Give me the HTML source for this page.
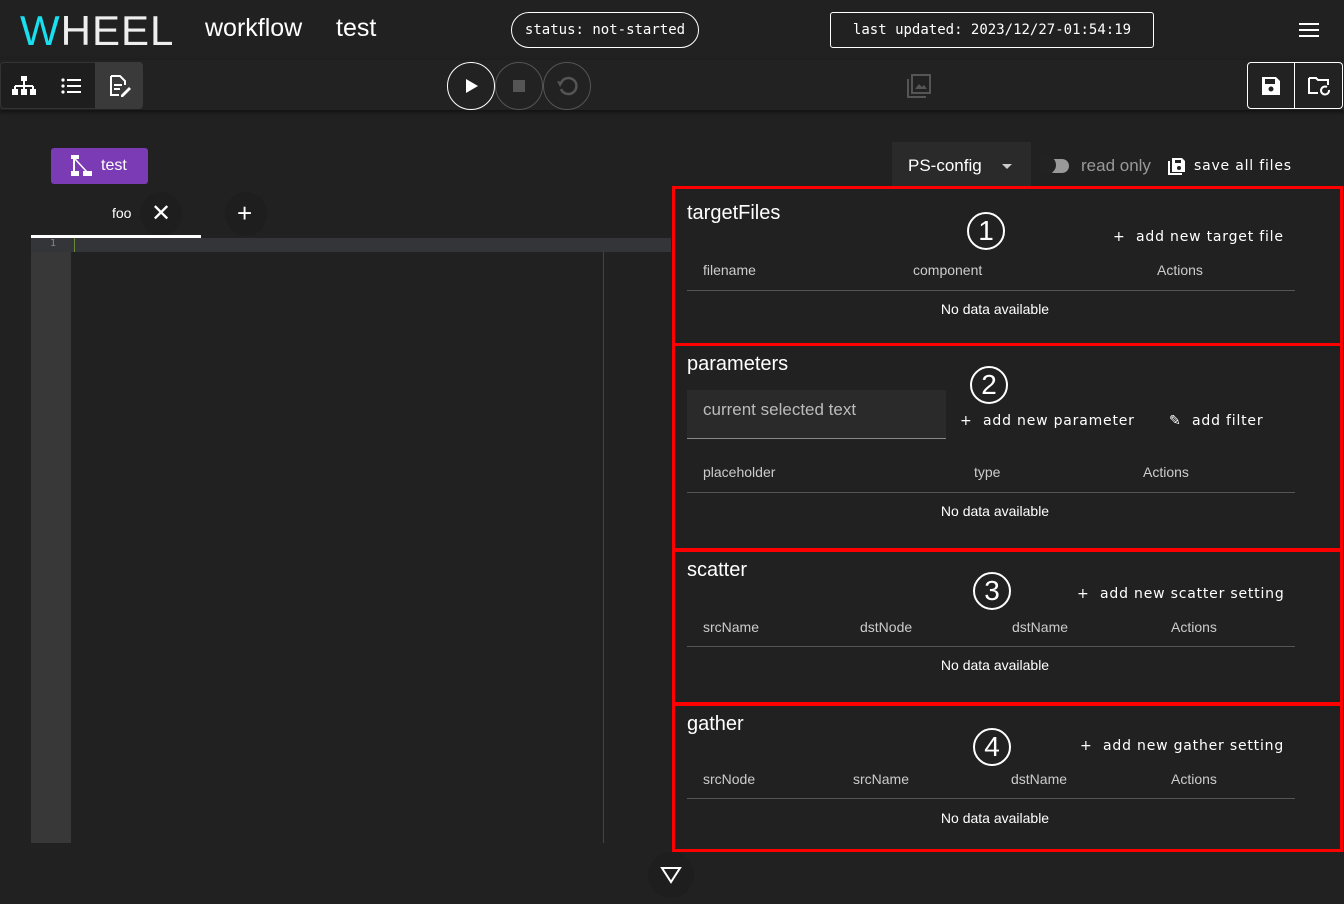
<!DOCTYPE html>
<html><head><meta charset="utf-8"><style>
*{box-sizing:border-box;margin:0;padding:0}
body{width:1344px;height:904px;background:#212121;color:#fff;font-family:"Liberation Sans",sans-serif;position:relative;overflow:hidden}
.a{position:absolute}
.mono{font-family:"DejaVu Sans Mono","Liberation Mono",monospace}
.box{position:absolute;left:672px;width:671px;border:3px solid #f00}
.ttl{position:absolute;left:12px;font-size:20px}
.hd{position:absolute;font-size:14px;color:#ccc}
.line{position:absolute;left:12px;width:608px;height:1px;background:#555}
.nd{position:absolute;left:0;width:640px;text-align:center;font-size:14px}
.num{position:absolute;width:38px;height:38px;border:2px solid #fff;border-radius:50%;font-size:28px;text-align:center;line-height:34px}
.btn{position:absolute;letter-spacing:.8px;font-family:"DejaVu Sans",sans-serif;font-size:14px}
</style></head><body>
<div class="a" style="left:20px;top:7px;font-size:42px;letter-spacing:1px;font-weight:300;color:#eee"><span style="color:#19e0f0">W</span>HEEL</div>
<div class="a" style="left:205px;top:14px;font-size:25px">workflow</div>
<div class="a" style="left:336px;top:14px;font-size:25px">test</div>
<div class="a mono" style="left:511px;top:12px;width:188px;height:36px;border:1px solid #fff;border-radius:18px;font-size:14px;text-align:center;line-height:34px">status: not-started</div>
<div class="a mono" style="left:830px;top:12px;width:324px;height:36px;border:1px solid #fff;border-radius:3px;font-size:14px;text-align:center;line-height:34px">last updated: 2023/12/27-01:54:19</div>
<div class="a" style="left:1299px;top:23px;width:20px;height:2px;background:#fff;box-shadow:0 6px 0 #fff,0 12px 0 #fff"></div>
<div class="a" style="left:0;top:60px;width:1344px;height:50px;background:#222;box-shadow:0 2px 4px rgba(0,0,0,.5)"></div>
<div class="a" style="left:0;top:62px;width:143px;height:47px;border-radius:4px;background:#1e1e1e;border:1px solid #333"></div>
<div class="a" style="left:95px;top:62px;width:48px;height:47px;background:#3a3a3a;border-radius:0 4px 4px 0"></div>
<svg class="a" style="left:12px;top:76px" width="24" height="20"><rect x="9" y="0" width="6" height="5" fill="#fff"/><path d="M12 5v5M3 10h18M3 10v4M12 10v4M21 10v4" stroke="#fff" stroke-width="2"/><rect x="0" y="13" width="6" height="6" fill="#fff"/><rect x="9" y="13" width="6" height="6" fill="#fff"/><rect x="18" y="13" width="6" height="6" fill="#fff"/></svg>
<svg class="a" style="left:61px;top:78px" width="20" height="16"><g fill="#fff"><circle cx="2" cy="2" r="1.6"/><circle cx="2" cy="8" r="1.6"/><circle cx="2" cy="14" r="1.6"/><rect x="6" y="1" width="14" height="2"/><rect x="6" y="7" width="14" height="2"/><rect x="6" y="13" width="14" height="2"/></g></svg>
<svg class="a" style="left:109px;top:75px" width="22" height="22"><path d="M2 1h9l5 5v4M2 1v19h8" stroke="#fff" stroke-width="2" fill="none"/><path d="M5 10h8M5 14h6" stroke="#fff" stroke-width="2"/><path d="M12 20l8-8 2 2-8 8h-2z" fill="#fff"/></svg>
<div class="a" style="left:447px;top:62px;width:48px;height:48px;border:1.5px solid #fff;border-radius:50%"></div>
<svg class="a" style="left:465px;top:78px" width="14" height="16"><path d="M1 1l12 7-12 7z" fill="#fff"/></svg>
<div class="a" style="left:495px;top:62px;width:48px;height:48px;border:1px solid #555;border-radius:50%"></div>
<div class="a" style="left:513px;top:80px;width:12px;height:12px;background:#555"></div>
<div class="a" style="left:543px;top:62px;width:48px;height:48px;border:1px solid #555;border-radius:50%"></div>
<svg class="a" style="left:556px;top:75px" width="22" height="22"><path d="M5 8a8 8 0 1 1 0 6" stroke="#555" stroke-width="2.5" fill="none"/><path d="M1 6l6 1-3 5z" fill="#555"/></svg>
<svg class="a" style="left:907px;top:74px" width="24" height="24"><rect x="5" y="1" width="18" height="18" stroke="#555" stroke-width="2" fill="none"/><path d="M1 5v18h18" stroke="#555" stroke-width="2" fill="none"/><path d="M8 15l4-5 3 3 2-2 3 4z" fill="#555"/></svg>
<div class="a" style="left:1247px;top:62px;width:48px;height:47px;border:1px solid #fff;border-radius:4px 0 0 4px"></div>
<div class="a" style="left:1295px;top:62px;width:48px;height:47px;border:1px solid #fff;border-left:none;border-radius:0 4px 4px 0"></div>
<svg class="a" style="left:1261px;top:76px" width="20" height="20"><path d="M1 1h14l4 4v14H1z" fill="#fff"/><rect x="4" y="3" width="10" height="5" fill="#222"/><circle cx="10" cy="13" r="2.5" fill="#222"/></svg>
<svg class="a" style="left:1307px;top:76px" width="24" height="20"><path d="M2 2h7l2 2h10v5M2 2v15h9" stroke="#fff" stroke-width="2" fill="none"/><path d="M22 14a4 4 0 1 1-2-3" stroke="#fff" stroke-width="2" fill="none"/></svg>
<div class="a" style="left:51px;top:148px;width:97px;height:36px;background:#7b3bb5;border-radius:3px"></div>
<svg class="a" style="left:71px;top:155px" width="22" height="22"><rect x="0" y="0" width="8" height="4" fill="#fff"/><rect x="2" y="3" width="2" height="14" fill="#fff"/><path d="M4 4l12 13" stroke="#fff" stroke-width="1.5"/><rect x="0" y="16" width="8" height="5" fill="#fff"/><rect x="12" y="16" width="9" height="5" fill="#fff"/></svg>
<div class="a" style="left:101px;top:157px;font-size:16px">test</div>
<div class="a" style="left:112px;top:205px;font-size:14px">foo</div>
<div class="a" style="left:140px;top:192px;width:42px;height:44px;border-radius:50%;background:#1e1e1e"></div>
<div class="a" style="left:151px;top:199px;font-size:24px">✕</div>
<div class="a" style="left:225px;top:192px;width:42px;height:44px;border-radius:50%;background:#1e1e1e"></div>
<div class="a" style="left:237px;top:198px;font-size:26px">+</div>
<div class="a" style="left:31px;top:235px;width:170px;height:3px;background:#fff"></div>
<div class="a" style="left:31px;top:238px;width:640px;height:14px;background:#333538"></div>
<div class="a mono" style="left:50px;top:238px;font-size:10px;color:#888">1</div>
<div class="a" style="left:74px;top:238px;width:1px;height:14px;background:#6a8a3a"></div>
<div class="a" style="left:31px;top:252px;width:40px;height:591px;background:#383838"></div>
<div class="a" style="left:603px;top:252px;width:1px;height:591px;background:#444"></div>
<div class="a" style="left:892px;top:142px;width:139px;height:46px;background:#2a2a2a"></div>
<div class="a" style="left:908px;top:156px;font-size:17px">PS-config</div>
<div class="a" style="left:1002px;top:164px;border:5px solid transparent;border-top-color:#ccc"></div>
<div class="a" style="left:1047px;top:159px;width:22px;height:14px;border-radius:7px;background:#999"></div>
<div class="a" style="left:1038px;top:156px;width:18px;height:18px;border-radius:50%;background:#222"></div>
<div class="a" style="left:1081px;top:156px;font-size:17px;color:#999">read only</div>
<svg class="a" style="left:1168px;top:157px" width="18" height="18"><path d="M1 4v13h13" stroke="#fff" stroke-width="2" fill="none"/><path d="M4 1h10l3 3v11H4z" fill="#fff"/><rect x="7" y="3" width="6" height="3" fill="#222"/><circle cx="11" cy="11" r="2" fill="#222"/></svg>
<div class="btn" style="left:1194px;top:158px">save all files</div>

<div class="box" style="top:186px;height:160px">
<div class="ttl" style="top:13px">targetFiles</div>
<div class="num" style="left:292px;top:23px">1</div>
<div class="btn" style="left:438px;top:40px">+&nbsp; add new target file</div>
<div class="hd" style="left:28px;top:73px">filename</div><div class="hd" style="left:238px;top:73px">component</div><div class="hd" style="left:482px;top:73px">Actions</div>
<div class="line" style="top:101px"></div>
<div class="nd" style="top:112px">No data available</div>
</div>
<div class="box" style="top:346px;height:205px;border-top:none">
<div class="ttl" style="top:7px">parameters</div>
<div class="num" style="left:295px;top:20px">2</div>
<div class="a" style="left:12px;top:44px;width:259px;height:49px;background:#2a2a2a;border-bottom:1px solid #888"></div>
<div class="a" style="left:28px;top:54px;font-size:17px;color:#bbb">current selected text</div>
<div class="btn" style="left:285px;top:67px">+&nbsp; add new parameter</div>
<div class="btn" style="left:494px;top:67px">✎&nbsp; add filter</div>
<div class="hd" style="left:28px;top:118px">placeholder</div><div class="hd" style="left:299px;top:118px">type</div><div class="hd" style="left:468px;top:118px">Actions</div>
<div class="line" style="top:146px"></div>
<div class="nd" style="top:157px">No data available</div>
</div>
<div class="box" style="top:549px;height:156px">
<div class="ttl" style="top:7px">scatter</div>
<div class="num" style="left:298px;top:20px">3</div>
<div class="btn" style="left:402px;top:34px">+&nbsp; add new scatter setting</div>
<div class="hd" style="left:28px;top:67px">srcName</div><div class="hd" style="left:185px;top:67px">dstNode</div><div class="hd" style="left:337px;top:67px">dstName</div><div class="hd" style="left:496px;top:67px">Actions</div>
<div class="line" style="top:94px"></div>
<div class="nd" style="top:105px">No data available</div>
</div>
<div class="box" style="top:703px;height:149px">
<div class="ttl" style="top:7px">gather</div>
<div class="num" style="left:298px;top:22px">4</div>
<div class="btn" style="left:405px;top:32px">+&nbsp; add new gather setting</div>
<div class="hd" style="left:28px;top:65px">srcNode</div><div class="hd" style="left:178px;top:65px">srcName</div><div class="hd" style="left:336px;top:65px">dstName</div><div class="hd" style="left:496px;top:65px">Actions</div>
<div class="line" style="top:92px"></div>
<div class="nd" style="top:104px">No data available</div>
</div>
<div class="a" style="left:648px;top:852px;width:46px;height:46px;border-radius:50%;background:#1e1e1e"></div>
<svg class="a" style="left:660px;top:866px" width="22" height="18"><path d="M2 2h18L11 16z" stroke="#fff" stroke-width="2" fill="none"/></svg>
</body></html>
